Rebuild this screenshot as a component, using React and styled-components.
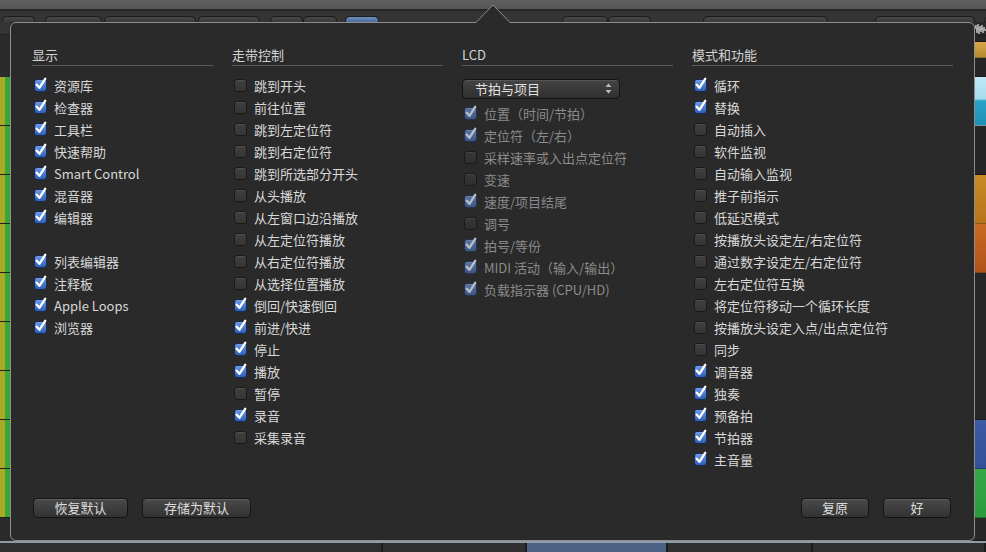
import React from "react";
import styled, { createGlobalStyle } from "styled-components";

const GlobalStyle = createGlobalStyle`
  html, body { margin: 0; padding: 0; background: #2d2d2d; }
  body { font-family: "Noto Sans CJK SC", "Liberation Sans", sans-serif; }
`;

const toolButtons = [
  { ml: 2, w: 31 }, { ml: 10, w: 55 }, { ml: 2, w: 90 }, { ml: 2, w: 60 },
  { ml: 10, w: 31 }, { ml: 0, w: 32 }, { ml: 8, w: 32, blue: true },
  { ml: 183, w: 44 }, { ml: 0, w: 41 }, { ml: 52, w: 123 }, { ml: 47, w: 98 }, { ml: 9, w: 30 },
];

const leftTracks = Array.from({ length: 9 });

const rightBlocks = [
  { h: 14, c: "#2a2a2a", wave: true },
  { h: 6, c: "#262626" },
  { h: 16, c: "linear-gradient(#d7a64a, #b88a2e)" },
  { h: 19, c: "#262626" },
  { h: 49, c: "linear-gradient(#bfe9f4 0%, #a6dcee 45%, #2aa3c8 50%, #1f8fb5 100%)" },
  { h: 49, c: "#262626" },
  { h: 49, c: "linear-gradient(#c98a26, #b8741c)" },
  { h: 49, c: "linear-gradient(#c76a22, #b0531a)" },
  { h: 147, c: "#272727" },
  { h: 49, c: "linear-gradient(#3d5aa6, #34509a)" },
  { h: 49, c: "linear-gradient(#37a847, #2b9a3b)" },
  { h: 23, c: "#272727" },
];

const displayItems = [
  ["资源库", true], ["检查器", true], ["工具栏", true], ["快速帮助", true],
  ["Smart Control", true], ["混音器", true], ["编辑器", true], null,
  ["列表编辑器", true], ["注释板", true], ["Apple Loops", true], ["浏览器", true],
];

const transportItems = [
  ["跳到开头", false], ["前往位置", false], ["跳到左定位符", false], ["跳到右定位符", false],
  ["跳到所选部分开头", false], ["从头播放", false], ["从左窗口边沿播放", false],
  ["从左定位符播放", false], ["从右定位符播放", false], ["从选择位置播放", false],
  ["倒回/快速倒回", true], ["前进/快进", true], ["停止", true], ["播放", true],
  ["暂停", false], ["录音", true], ["采集录音", false],
];

const lcdItems = [
  ["位置（时间/节拍）", true], ["定位符（左/右）", true], ["采样速率或入出点定位符", false],
  ["变速", false], ["速度/项目结尾", true], ["调号", false], ["拍号/等份", true],
  ["MIDI 活动（输入/输出）", true], ["负载指示器 (CPU/HD)", true],
];

const modeItems = [
  ["循环", true], ["替换", true], ["自动插入", false], ["软件监视", false],
  ["自动输入监视", false], ["推子前指示", false], ["低延迟模式", false],
  ["按播放头设定左/右定位符", false], ["通过数字设定左/右定位符", false],
  ["左右定位符互换", false], ["将定位符移动一个循环长度", false],
  ["按播放头设定入点/出点定位符", false], ["同步", false], ["调音器", true],
  ["独奏", true], ["预备拍", true], ["节拍器", true], ["主音量", true],
];

function Check({ checked, disabled }) {
  return (
    <Box $checked={checked} $disabled={disabled}>
      {checked && (
        <svg width="13" height="13" viewBox="0 0 13 13">
          <path
            d="M2.6 6.6 L5.4 9.8 L11.2 0.8"
            fill="none"
            stroke={disabled ? "#b9c0cb" : "#ffffff"}
            strokeWidth="2.3"
            strokeLinecap="round"
            strokeLinejoin="round"
          />
        </svg>
      )}
    </Box>
  );
}

function OptionList({ items, disabled }) {
  return (
    <List>
      {items.map((item, i) =>
        item ? (
          <Item key={i} $disabled={disabled}>
            <Check checked={item[1]} disabled={disabled} />
            <span>{item[0]}</span>
          </Item>
        ) : (
          <Spacer key={i} />
        )
      )}
    </List>
  );
}

export default function App() {
  return (
    <>
      <GlobalStyle />
      <Page>
        <TopBar>
          <Band />
          <Rule />
          <Toolbar>
            {toolButtons.map((b, i) => (
              <ToolButton key={i} $w={b.w} $ml={b.ml} $blue={b.blue} />
            ))}
          </Toolbar>
        </TopBar>

        <Middle>
          <LeftStrip>
            <StripTool />
            <StripBlank $h={42} />
            {leftTracks.map((_, i) => (
              <Track key={i} />
            ))}
            <StripBlank $h={23} />
          </LeftStrip>

          <Dialog>
            <Pointer width="36" height="20" viewBox="0 0 36 20">
              <path d="M0 19.5 L18 1 L36 19.5 Z" fill="#2a2a2a" />
              <path d="M0.5 19 L18 1 L35.5 19" fill="none" stroke="#8e8e8e" strokeWidth="1" />
            </Pointer>

            <Columns>
              <Column>
                <Heading>显示</Heading>
                <OptionList items={displayItems} />
              </Column>
              <Column>
                <Heading>走带控制</Heading>
                <OptionList items={transportItems} />
              </Column>
              <Column>
                <Heading>LCD</Heading>
                <Select>
                  <span>节拍与项目</span>
                  <svg width="7" height="11" viewBox="0 0 7 11">
                    <path d="M3.5 0.5 L6.5 4 L0.5 4 Z" fill="#bdbdbd" />
                    <path d="M0.5 7 L6.5 7 L3.5 10.5 Z" fill="#bdbdbd" />
                  </svg>
                </Select>
                <OptionList items={lcdItems} disabled />
              </Column>
              <Column>
                <Heading>模式和功能</Heading>
                <OptionList items={modeItems} />
              </Column>
            </Columns>

            <Footer>
              <ButtonGroup>
                <Button $w={95}>恢复默认</Button>
                <Button $w={109}>存储为默认</Button>
              </ButtonGroup>
              <ButtonGroup>
                <Button $w={68}>复原</Button>
                <Button $w={68}>好</Button>
              </ButtonGroup>
            </Footer>
          </Dialog>

          <RightStrip>
            {rightBlocks.map((b, i) => (
              <Block key={i} $h={b.h} $c={b.c}>
                {b.wave && (
                  <svg width="11" height="14" viewBox="0 0 11 14">
                    <path
                      d="M0 7 L1 3 L2 11 L3 2 L4 12 L5 4 L6 10 L7 3 L8 11 L9 5 L10 9 L11 7"
                      fill="none"
                      stroke="#d8d8d8"
                      strokeWidth="0.8"
                    />
                  </svg>
                )}
              </Block>
            ))}
          </RightStrip>
        </Middle>

        <BottomBar>
          <BottomLine />
          <Segments>
            <Segment $w={383} />
            <Segment $w={144} />
            <Segment $w={141} $blue />
            <Segment $w={145} />
            <Segment $w={173} />
          </Segments>
        </BottomBar>
      </Page>
    </>
  );
}

const Page = styled.div`
  width: 986px;
  height: 552px;
  display: flex;
  flex-direction: column;
  background: #2d2d2d;
  overflow: hidden;
`;

const TopBar = styled.div`
  height: 22px;
  display: flex;
  flex-direction: column;
  flex-shrink: 0;
`;

const Band = styled.div`
  height: 9px;
  background: linear-gradient(#5f5f5f, #565656);
`;

const Rule = styled.div`
  height: 2px;
  background: #262626;
`;

const Toolbar = styled.div`
  flex: 1;
  display: flex;
  align-items: flex-end;
  background: #343434;
`;

const ToolButton = styled.div`
  width: ${(p) => p.$w}px;
  margin-left: ${(p) => p.$ml}px;
  height: 5px;
  flex-shrink: 0;
  border: 1px solid #1b1b1b;
  border-bottom: none;
  border-radius: 5px 5px 0 0;
  background: ${(p) => (p.$blue ? "linear-gradient(#6f8fbf, #4a6a9a)" : "linear-gradient(#474747, #3a3a3a)")};
`;

const Middle = styled.div`
  height: 519px;
  display: flex;
  flex-shrink: 0;
`;

const LeftStrip = styled.div`
  width: 10px;
  display: flex;
  flex-direction: column;
  flex-shrink: 0;
`;

const StripTool = styled.div`
  height: 13px;
  background: #343434;
  border-bottom: 1px solid #222;
  box-sizing: border-box;
`;

const StripBlank = styled.div`
  height: ${(p) => p.$h}px;
  background: #2b2b2b;
`;

const Track = styled.div`
  height: 49px;
  box-sizing: border-box;
  border-bottom: 1px solid #1e1e1e;
  background: linear-gradient(90deg, #a9a925 0%, #a9a925 45%, #3aa63a 55%, #3aa63a 100%);
`;

const Dialog = styled.div`
  position: relative;
  width: 965px;
  box-sizing: border-box;
  flex-shrink: 0;
  border: 1px solid #8e8e8e;
  border-radius: 6px;
  background: #2a2a2a;
  padding: 24px 21px 22px 21px;
  display: flex;
  flex-direction: column;
  color: #d6d6d6;
  font-size: 13px;
`;

const Pointer = styled.svg`
  position: absolute;
  top: -19px;
  left: 464px;
`;

const Columns = styled.div`
  display: grid;
  grid-template-columns: 181px 211px 211px 261px;
  column-gap: 19px;
  flex: 1;
`;

const Column = styled.div`
  display: flex;
  flex-direction: column;
`;

const Heading = styled.div`
  height: 15px;
  line-height: 15px;
  padding-bottom: 3px;
  border-bottom: 1px solid #5a5a5a;
  color: #d2d2d2;
  margin-bottom: 9px;
`;

const List = styled.div`
  display: flex;
  flex-direction: column;
`;

const Item = styled.div`
  height: 22px;
  box-sizing: border-box;
  padding-bottom: 2px;
  display: flex;
  align-items: center;
  gap: 7px;
  padding-left: 2px;
  white-space: nowrap;
  color: ${(p) => (p.$disabled ? "#8b8b8b" : "#d8d8d8")};
`;

const Spacer = styled.div`
  height: 22px;
`;

const Box = styled.span`
  width: 13px;
  height: 13px;
  box-sizing: border-box;
  flex-shrink: 0;
  display: flex;
  align-items: center;
  justify-content: center;
  border-radius: 3px;
  border: 1px solid ${(p) => (p.$checked ? (p.$disabled ? "#263350" : "#182a52") : "#1a1a1a")};
  background: ${(p) =>
    p.$checked
      ? p.$disabled
        ? "linear-gradient(#5b74a0, #3e5684)"
        : "linear-gradient(#6697e6, #2f60b8)"
      : p.$disabled
      ? "linear-gradient(#363636, #2f2f2f)"
      : "linear-gradient(#404040, #353535)"};
  box-shadow: inset 0 1px 0 rgba(255, 255, 255, 0.08);

  svg {
    overflow: visible;
    margin-top: -2px;
  }
`;

const Select = styled.div`
  margin: 4px 0 4px;
  width: 158px;
  height: 20px;
  box-sizing: border-box;
  display: flex;
  align-items: center;
  justify-content: space-between;
  padding: 0 7px 1px 12px;
  border: 1px solid #131313;
  border-radius: 4px;
  background: linear-gradient(#444, #2f2f2f);
  box-shadow: inset 0 1px 0 rgba(255, 255, 255, 0.1);
  color: #e0e0e0;
`;

const Footer = styled.div`
  display: flex;
  justify-content: space-between;
  padding: 0 2px 0 1px;
`;

const ButtonGroup = styled.div`
  display: flex;
  gap: 14px;
`;

const Button = styled.div`
  width: ${(p) => p.$w}px;
  height: 20px;
  box-sizing: border-box;
  display: flex;
  align-items: center;
  justify-content: center;
  padding-bottom: 1px;
  border: 1px solid #141414;
  border-radius: 4px;
  background: linear-gradient(#4a4a4a, #323232);
  box-shadow: inset 0 1px 0 rgba(255, 255, 255, 0.12);
  color: #dcdcdc;
`;

const RightStrip = styled.div`
  width: 11px;
  display: flex;
  flex-direction: column;
  flex-shrink: 0;
`;

const Block = styled.div`
  height: ${(p) => p.$h}px;
  background: ${(p) => p.$c};
  box-sizing: border-box;
  border-bottom: 1px solid rgba(0, 0, 0, 0.35);
  svg { display: block; }
`;

const BottomBar = styled.div`
  height: 11px;
  display: flex;
  flex-direction: column;
  flex-shrink: 0;
`;

const BottomLine = styled.div`
  height: 2px;
  background: #8d9cab;
`;

const Segments = styled.div`
  flex: 1;
  display: flex;
  background: #1d1d1d;
`;

const Segment = styled.div`
  width: ${(p) => p.$w}px;
  box-sizing: border-box;
  border-right: 2px solid #1d1d1d;
  background: ${(p) => (p.$blue ? "#4b6284" : "#303030")};
`;
